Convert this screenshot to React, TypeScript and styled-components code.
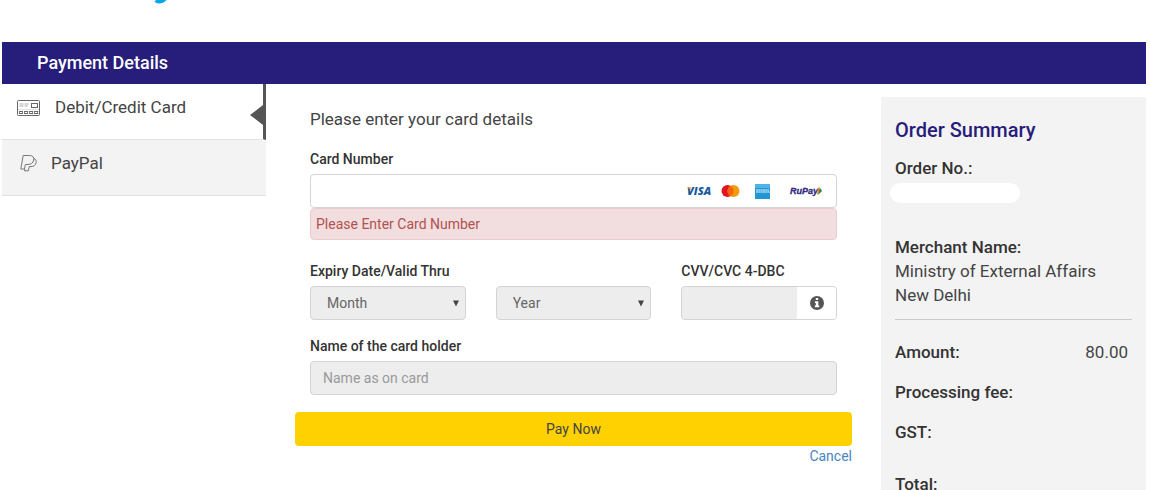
import React from "react";
import styled, { createGlobalStyle } from "styled-components";

const GlobalStyle = createGlobalStyle`
  *, *::before, *::after { box-sizing: border-box; }
  body {
    margin: 0;
    background: #fff;
    color: #444;
    font-family: Roboto, "Liberation Sans", sans-serif;
    font-size: 14px;
    line-height: 20px;
  }
  input, select, button { font: inherit; }
`;

const Page = styled.div`
  height: 100vh;
  overflow: hidden;
  padding: 0 4px 0 2px;
`;

const Brand = styled.div`
  height: 42px;
  padding-left: 148px;

  svg { display: block; }
`;

const Header = styled.header`
  background: #271d7a;
  padding: 0 35px;

  h1 {
    margin: 0;
    color: #fff;
    font-size: 18px;
    font-weight: 500;
    line-height: 42px;
  }
`;

const Columns = styled.div`
  display: grid;
  grid-template-columns: minmax(0, 264fr) minmax(0, 615fr) minmax(0, 265fr);
  align-items: start;
`;

const Methods = styled.nav`
  display: flex;
  flex-direction: column;
`;

const Method = styled.a<{ $active?: boolean }>`
  position: relative;
  display: flex;
  align-items: flex-start;
  gap: 14px;
  height: 56px;
  padding: 12px 15px;
  border-bottom: 1px solid #e2e2e2;
  border-right: ${(p) => (p.$active ? "3px solid #555" : "0")};
  background: ${(p) => (p.$active ? "#fff" : "#f3f3f3")};
  color: #444;
  font-size: 17px;
  line-height: 22px;
  text-decoration: none;

  svg { flex: none; }
`;

const Pointer = styled.span`
  position: absolute;
  right: 0;
  top: 21px;
  border: 10px solid transparent;
  border-left-width: 0;
  border-right: 13px solid #555;
`;

const Form = styled.form`
  padding: 24px 29px 0;
`;

const Fields = styled.div`
  padding: 0 15px;
`;

const Intro = styled.p`
  margin: 0 0 19px;
  font-size: 17px;
  line-height: 22px;
`;

const Label = styled.label`
  display: block;
  margin-bottom: 5px;
  color: #333;
  font-weight: 500;
`;

const Control = styled.div<{ $muted?: boolean }>`
  display: flex;
  align-items: center;
  height: 34px;
  overflow: hidden;
  border: 1px solid #d4d4d4;
  border-radius: 4px;
  background: ${(p) => (p.$muted ? "#ededed" : "#fff")};
`;

const TextInput = styled.input`
  flex: 1;
  min-width: 0;
  height: 100%;
  padding: 6px 12px;
  border: 0;
  outline: 0;
  background: transparent;
  color: #555;

  &::placeholder { color: #999; opacity: 1; }
`;

const Brands = styled.div`
  display: flex;
  flex: none;
  align-items: center;
  width: 153px;
  padding-left: 3px;
`;

const ErrorMessage = styled.div`
  padding: 5px;
  border: 1px solid #ebccd1;
  border-radius: 4px;
  background: #f2dede;
  color: #b05250;
`;

const DateRow = styled.div`
  display: grid;
  grid-template-columns: repeat(3, minmax(0, 1fr));
  column-gap: 30px;
  margin: 21px 0 16px;
`;

const DateCell = styled.div`
  display: flex;
  flex-direction: column;
  justify-content: flex-end;
`;

const SelectBox = styled.div`
  position: relative;

  svg {
    position: absolute;
    right: 7px;
    top: 14px;
    pointer-events: none;
  }
`;

const Select = styled.select`
  display: block;
  width: 100%;
  height: 34px;
  padding: 0 16px;
  appearance: none;
  border: 1px solid #d4d4d4;
  border-radius: 4px;
  background: #ededed;
  color: #666;
`;

const InfoButton = styled.button`
  display: flex;
  align-items: center;
  justify-content: center;
  flex: none;
  width: 39px;
  height: 100%;
  padding: 0;
  border: 0;
  background: #fff;
`;

const PayButton = styled.button`
  display: block;
  width: 100%;
  height: 34px;
  margin-top: 17px;
  border: 0;
  border-radius: 4px;
  background: #ffd100;
  color: #444;
`;

const CancelRow = styled.div`
  text-align: right;

  a { color: #4a86c0; text-decoration: none; }
`;

const Summary = styled.aside`
  margin-top: 13px;
  padding: 20px 14px 24px;
  background: #f3f3f3;
  font-size: 17px;
  line-height: 24px;

  h2 {
    margin: 0 0 13px;
    color: #271d7a;
    font-size: 20px;
    font-weight: 500;
    line-height: 26px;
  }
  h3, p, dl, dt, dd { margin: 0; }
  h3, dt {
    color: #333;
    font-size: 17px;
    font-weight: 500;
  }
`;

const OrderNumber = styled.div`
  width: 130px;
  height: 20px;
  margin: 3px 0 32px -5px;
  border-radius: 10px;
  background: #fff;
`;

const Merchant = styled.p`
  padding-bottom: 12px;
  border-bottom: 1px solid #ccc;
`;

const Amounts = styled.dl`
  padding-top: 20px;
`;

const AmountRow = styled.div<{ $total?: boolean }>`
  display: flex;
  justify-content: space-between;
  margin-top: ${(p) => (p.$total ? "12px" : "0")};
  padding: 0 4px 16px 0;
`;

const CardIcon = () => (
  <svg width="24" height="24" viewBox="0 0 24 24" fill="none" stroke="#666" aria-hidden="true">
    <rect x="0.5" y="4.5" width="22" height="15" rx="1" />
    <path d="M2.500 8h4M7.500 8h4M2.500 10h4M7.500 10h3" strokeWidth="0.700" stroke="#888" />
    <rect x="14.500" y="7.500" width="6" height="4" />
    <path d="M1 13.500h21" stroke="#ccc" strokeWidth="0.600" />
    <path d="M2 15.500h19.500M2 17.500h19.500" strokeDasharray="4 1.100" />
    <path d="M2.500 15v3M5.500 15v3M7.500 15v3M10.500 15v3M12.500 15v3M15.500 15v3M17.500 15v3M20.500 15v3" strokeWidth="0.800" />
  </svg>
);

const PayPalIcon = () => (
  <svg width="20" height="24" viewBox="1 1 20 24" fill="none" stroke="#777" strokeLinejoin="round" aria-hidden="true">
    <path d="M7.200 4.500h6.300c3.200 0 4.800 1.700 4.200 4.500-.6 3.100-2.700 4.500-5.900 4.500H9.400l-1 4.500H4.800z" />
    <path d="M18 7.500c2 .9 2.500 2.300 2.100 4.200-.6 2.700-2.500 3.900-5.100 3.900h-1.700l-.9 4.200H8.500l.4-1.800" />
  </svg>
);

const DownArrow = () => (
  <svg width="6" height="7" viewBox="0 0 6 7" aria-hidden="true">
    <path d="M0 0.500h6L3 6.500z" fill="#444" />
  </svg>
);

const InfoIcon = () => (
  <svg width="14" height="14" viewBox="0 0 14 14" aria-hidden="true">
    <circle cx="7" cy="7" r="7" fill="#555" />
    <path d="M5.800 2h2.400v2H5.800zM4.900 5.300h3.400v4.200h1v1.700H4.800V9.500h1V7h-.9z" fill="#fff" />
  </svg>
);

const CardBrands = () => (
  <svg width="140" height="20" viewBox="0 0 140 20" role="img" aria-label="Accepted cards">
    <text x="1" y="14" fontFamily="Open Sans" fontSize="11" fontWeight="800" fontStyle="italic" fill="#1a5a9e">VISA</text>
    <path d="M1 6h3l1.200 3z" fill="#f0a01e" />
    <circle cx="41.500" cy="10" r="6" fill="#e3131f" />
    <circle cx="47.500" cy="10" r="6" fill="#f79a0a" />
    <path d="M44.500 4.800a6 6 0 0 1 0 10.400a6 6 0 0 1 0-10.400z" fill="#f26312" />
    <rect x="69" y="3" width="15" height="15" fill="#2196d4" />
    <path d="M69 3h15v4H69z" fill="#4fb3e4" />
    <path d="M70 9h13M70 11h14" stroke="#a9daf2" strokeWidth="1.500" strokeDasharray="2 .3" />
    <text x="104" y="13" fontFamily="Liberation Sans" fontSize="9" fontWeight="700" fontStyle="italic" fill="#302a80" stroke="#302a80" strokeWidth="0.300">RuPay</text>
    <path d="M132 6l3 4-4 4z" fill="#f47b20" />
    <path d="M133.500 6l2.500 4-4 4 1.500-4z" fill="#168a45" />
  </svg>
);

export default function App() {
  return (
    <>
      <GlobalStyle />
      <Page>
        <Brand>
          <svg width="20" height="4" viewBox="0 0 20 4" aria-hidden="true">
            <path d="M6 0Q5 1 4.500 1.800Q6 3.600 9 3.600Q13.500 3.600 16.500 0z" fill="#00a9e6" />
          </svg>
        </Brand>
        <Header>
          <h1>Payment Details</h1>
        </Header>
        <Columns>
          <Methods aria-label="Payment methods">
            <Method href="#card" $active aria-current="true">
              <CardIcon />
              Debit/Credit Card
              <Pointer />
            </Method>
            <Method href="#paypal">
              <PayPalIcon />
              PayPal
            </Method>
          </Methods>

          <Form onSubmit={(e) => e.preventDefault()}>
            <Fields>
              <Intro>Please enter your card details</Intro>
              <Label htmlFor="card-number">Card Number</Label>
              <Control>
                <TextInput id="card-number" inputMode="numeric" aria-invalid="true" aria-describedby="card-error" />
                <Brands>
                  <CardBrands />
                </Brands>
              </Control>
              <ErrorMessage id="card-error">Please Enter Card Number</ErrorMessage>

              <DateRow>
                <DateCell>
                  <Label htmlFor="month">Expiry Date/Valid Thru</Label>
                  <SelectBox>
                    <Select id="month" defaultValue="">
                      <option value="">Month</option>
                    </Select>
                    <DownArrow />
                  </SelectBox>
                </DateCell>
                <DateCell>
                  <SelectBox>
                    <Select aria-label="Expiry year" defaultValue="">
                      <option value="">Year</option>
                    </Select>
                    <DownArrow />
                  </SelectBox>
                </DateCell>
                <DateCell>
                  <Label htmlFor="cvv">CVV/CVC 4-DBC</Label>
                  <Control $muted>
                    <TextInput id="cvv" type="password" autoComplete="off" />
                    <InfoButton type="button" aria-label="About the security code">
                      <InfoIcon />
                    </InfoButton>
                  </Control>
                </DateCell>
              </DateRow>

              <Label htmlFor="holder">Name of the card holder</Label>
              <Control $muted>
                <TextInput id="holder" placeholder="Name as on card" />
              </Control>
            </Fields>
            <PayButton type="submit">Pay Now</PayButton>
            <CancelRow>
              <a href="#cancel">Cancel</a>
            </CancelRow>
          </Form>

          <Summary>
            <h2>Order Summary</h2>
            <h3>Order No.:</h3>
            <OrderNumber />
            <h3>Merchant Name:</h3>
            <Merchant>
              Ministry of External Affairs
              <br />
              New Delhi
            </Merchant>
            <Amounts>
              <AmountRow>
                <dt>Amount:</dt>
                <dd>80.00</dd>
              </AmountRow>
              <AmountRow>
                <dt>Processing fee:</dt>
              </AmountRow>
              <AmountRow>
                <dt>GST:</dt>
              </AmountRow>
              <AmountRow $total>
                <dt>Total:</dt>
              </AmountRow>
            </Amounts>
          </Summary>
        </Columns>
      </Page>
    </>
  );
}
